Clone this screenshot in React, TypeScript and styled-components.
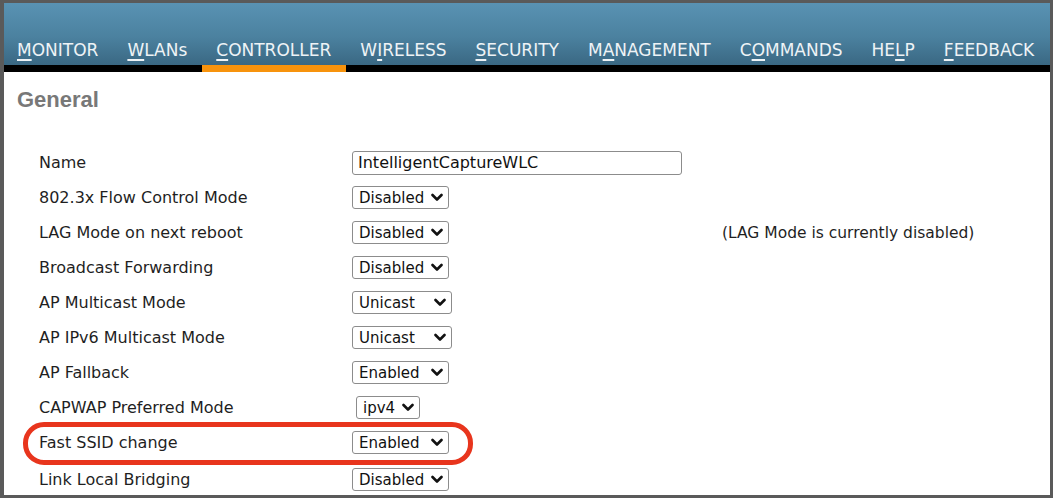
import React from "react";
import styled, { createGlobalStyle, css } from "styled-components";

const Global = createGlobalStyle`
  html, body { margin: 0; padding: 0; background: #ffffff; }
  body { font-family: "DejaVu Sans", Verdana, sans-serif; }
  *, *::before, *::after { box-sizing: border-box; }
`;

const Frame = styled.div`
  width: 1053px;
  height: 498px;
  border-style: solid;
  border-color: #5a5a5a;
  border-width: 3px 3px 3px 4px;
  background: #ffffff;
  overflow: hidden;
  display: flex;
  flex-direction: column;
`;

const NavBar = styled.nav`
  height: 69px;
  flex: none;
  display: flex;
  align-items: flex-end;
  background: linear-gradient(#5992b3 0%, #4b819f 55%, #3a6883 100%);
  border-bottom: 7px solid #000000;
`;

const NavItem = styled.div<{ $active?: boolean }>`
  padding: 0 14.5px 5px;
  margin-bottom: -7px;
  border-bottom: 7px solid ${(p) => (p.$active ? "#f7930d" : "transparent")};
  color: #eef3f6;
  font-family: "DejaVu Sans", Verdana, sans-serif;
  font-size: 17px;
  line-height: 20px;
  white-space: nowrap;
  &:first-child { padding-left: 13px; }
  u { text-decoration-thickness: 2px; text-underline-offset: 3px; }
`;

const Content = styled.div`
  flex: 1;
  position: relative;
  padding: 15px 0 0 13px;
`;

const Heading = styled.h1`
  margin: 0;
  font-family: "Liberation Sans", Arial, sans-serif;
  font-weight: bold;
  font-size: 22px;
  line-height: 26px;
  color: #787878;
`;

const Form = styled.div`
  margin-top: 32px;
  margin-left: -13px;
  display: flex;
  flex-direction: column;
`;

const Row = styled.div<{ $highlight?: boolean; $last?: boolean }>`
  position: relative;
  height: 35px;
  display: grid;
  grid-template-columns: 313px 370px 1fr;
  align-items: center;
  padding-left: 35px;
  ${(p) => p.$last && css`margin-top: 2px;`}
  ${(p) =>
    p.$highlight &&
    css`
      &::before {
        content: "";
        position: absolute;
        left: 19px;
        top: -3px;
        width: 450px;
        height: 43px;
        border: 5px solid #e8351d;
        border-radius: 21px;
        pointer-events: none;
      }
    `}
`;

const Label = styled.span`
  font-family: "DejaVu Sans", Verdana, sans-serif;
  font-size: 16px;
  color: #1f1f1f;
  white-space: nowrap;
`;

const Note = styled.span`
  font-family: "DejaVu Sans", Verdana, sans-serif;
  font-size: 15.5px;
  color: #1f1f1f;
  white-space: nowrap;
`;

const TextBox = styled.div`
  width: 330px;
  height: 24px;
  border: 1px solid #8c8c8c;
  border-radius: 3px;
  padding-left: 5px;
  display: flex;
  align-items: center;
  font-family: "DejaVu Sans", Verdana, sans-serif;
  font-size: 16px;
  color: #111;
`;

const SelectBox = styled.div<{ $w: number; $offset?: number }>`
  width: ${(p) => p.$w}px;
  margin-left: ${(p) => p.$offset ?? 0}px;
  height: 23px;
  border: 1px solid #8c8c8c;
  border-radius: 3px;
  padding: 0 5px 0 6px;
  display: flex;
  align-items: center;
  justify-content: space-between;
  font-family: "DejaVu Sans", Verdana, sans-serif;
  font-size: 15px;
  color: #111;
  background: #fff;
`;

const Chevron = () => (
  <svg width="12" height="9" viewBox="0 0 12 9">
    <polyline points="1.5,2 6,6.5 10.5,2" fill="none" stroke="#111" strokeWidth="2.6" strokeLinecap="round" strokeLinejoin="round" />
  </svg>
);

const Select = ({ value, w, offset }: { value: string; w: number; offset?: number }) => (
  <SelectBox $w={w} $offset={offset}>
    <span>{value}</span>
    <Chevron />
  </SelectBox>
);

const navItems: [string, string, string][] = [
  ["", "M", "ONITOR"],
  ["", "W", "LANs"],
  ["", "C", "ONTROLLER"],
  ["W", "I", "RELESS"],
  ["", "S", "ECURITY"],
  ["M", "A", "NAGEMENT"],
  ["C", "O", "MMANDS"],
  ["HE", "L", "P"],
  ["", "F", "EEDBACK"],
];

type RowDef = { label: string; value?: string; w?: number; offset?: number; input?: boolean; note?: string; highlight?: boolean };

const rows: RowDef[] = [
  { label: "Name", input: true, value: "IntelligentCaptureWLC" },
  { label: "802.3x Flow Control Mode", value: "Disabled", w: 97 },
  { label: "LAG Mode on next reboot", value: "Disabled", w: 97, note: "(LAG Mode is currently disabled)" },
  { label: "Broadcast Forwarding", value: "Disabled", w: 97 },
  { label: "AP Multicast Mode", value: "Unicast", w: 100 },
  { label: "AP IPv6 Multicast Mode", value: "Unicast", w: 100 },
  { label: "AP Fallback", value: "Enabled", w: 97 },
  { label: "CAPWAP Preferred Mode", value: "ipv4", w: 64, offset: 4 },
  { label: "Fast SSID change", value: "Enabled", w: 97, highlight: true },
  { label: "Link Local Bridging", value: "Disabled", w: 97 },
];

export default function App() {
  return (
    <>
      <Global />
      <Frame>
        <NavBar>
          {navItems.map(([pre, key, post], i) => (
            <NavItem key={i} $active={i === 2}>
              {pre}
              <u>{key}</u>
              {post}
            </NavItem>
          ))}
        </NavBar>
        <Content>
          <Heading>General</Heading>
          <Form>
            {rows.map((r, i) => (
              <Row key={r.label} $highlight={r.highlight} $last={i === rows.length - 1}>
                <Label>{r.label}</Label>
                <div>
                  {r.input ? (
                    <TextBox>{r.value}</TextBox>
                  ) : (
                    <Select value={r.value!} w={r.w!} offset={r.offset} />
                  )}
                </div>
                {r.note ? <Note>{r.note}</Note> : <span />}
              </Row>
            ))}
          </Form>
        </Content>
      </Frame>
    </>
  );
}
